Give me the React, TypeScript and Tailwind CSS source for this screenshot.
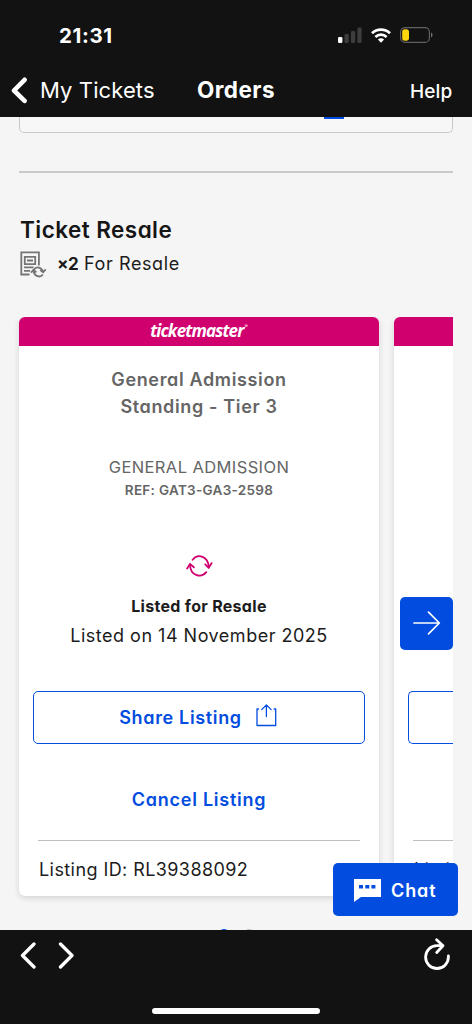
import React from "react";

function StatusBar() {
  return (
    <div className="flex h-[70px] items-center justify-between pl-[59px] pr-[39px]">
      <span className="pt-px text-[20.5px] font-bold leading-[24px] tracking-[0.6px]">21:31</span>
      <div className="flex items-center">
        <svg width="24" height="16" viewBox="0 0 24 16">
          <rect x="0" y="10" width="4.4" height="6" rx="1.2" fill="#fff" />
          <rect x="6.5" y="7" width="4.2" height="9" rx="1.2" fill="#3d3d3d" />
          <rect x="13" y="4" width="4.2" height="12" rx="1.2" fill="#3d3d3d" />
          <rect x="19.4" y="0.5" width="4.2" height="15.5" rx="1.2" fill="#3d3d3d" />
        </svg>
        <svg className="ml-[9px]" width="20" height="15" viewBox="0 0 20 15" fill="none" stroke="#fff" strokeWidth="2.7">
          <path d="M1 5.2C6 .4 14 .4 19 5.2" />
          <path d="M4.4 8.9C7.6 5.9 12.4 5.9 15.6 8.9" />
          <path d="M6.9 11.4C8.7 9.9 11.3 9.9 13.1 11.4L10 14.7Z" fill="#fff" stroke="none" />
        </svg>
        <svg className="ml-[9px]" width="33" height="16" viewBox="0 0 33 16">
          <rect x="0.6" y="0.6" width="28.8" height="14.8" rx="4.5" fill="none" stroke="#606060" strokeWidth="1.2" />
          <rect x="2.2" y="2.2" width="6.8" height="11.6" rx="2.8" fill="#ffd60a" />
          <path d="M31 5.5c2 .8 2 4.2 0 5z" fill="#707070" />
        </svg>
      </div>
    </div>
  );
}

function NavBar() {
  return (
    <div className="flex h-[47px] items-start pl-[11px]">
      <svg className="mt-[7px]" width="17" height="27" viewBox="0 0 17 27" fill="none" stroke="#fff" strokeWidth="4.6" strokeLinecap="round" strokeLinejoin="round">
        <path d="M13.6 2.8L3 13.5l10.6 10.3" />
      </svg>
      <span className="ml-[12px] w-[157px] whitespace-nowrap text-[22px] leading-[40px] tracking-[0.1px]">My Tickets</span>
      <span className="w-[213px] whitespace-nowrap text-[22.5px] font-bold leading-[40px] tracking-[0.45px]">Orders</span>
      <span className="whitespace-nowrap pt-[2px] text-[19px] font-medium leading-[40px] tracking-[0.1px]">Help</span>
    </div>
  );
}

function ResaleIcon() {
  return (
    <svg className="ml-[1px]" width="27" height="28" viewBox="0 0 27 28" fill="none" stroke="#757575" strokeWidth="1.8">
      <path d="M9.5 23.5H1.3V1.3h17.6v13.2" />
      <path d="M4.8 5.8h10.4v7.4H4.8z" />
      <path d="M7 9.5h6M4 16.3h9.5M4 19.8h6" />
      <path d="M13.8 18.7c2.2-3.5 7.7-2.9 9.1 1.8M20.3 19l2.8 2.3 2.6-3M11 21.7l2.5-3 2.9 2.7M13.5 20c.8 5.5 6.8 7.1 9.4 3.5" />
    </svg>
  );
}

function RefreshIcon() {
  return (
    <svg width="27" height="22" viewBox="0 0 27 22" fill="none" stroke="#d0006f" strokeWidth="1.8" strokeLinecap="round" strokeLinejoin="round">
      <path d="M6.6 4.7C12-1.9 22.4 1.4 22.8 12.4" />
      <path d="M19.2 9.4l3.5 3.4 3-4.7" />
      <path d="M20.3 17.2C14.8 23.7 4.2 20.5 4 9.4" />
      <path d="M1.1 13.5L4 8.9l3.9 3.3" />
    </svg>
  );
}

function ListingCard() {
  return (
    <div className="h-[579px] w-[360px] shrink-0 overflow-hidden rounded-[6px] bg-white text-center whitespace-nowrap">
      <div className="flex h-[29px] items-center justify-center bg-[#d0006f] text-white">
        <span className="pb-[2px] font-['Open_Sans'] text-[17px] font-bold italic leading-[28px] tracking-[-0.85px]">ticketmaster</span>
        <span className="-mt-[9px] ml-[1px] text-[5px]">®</span>
      </div>
      <div className="px-[14px]">
        <h3 className="mt-[20px] text-[18px] font-semibold leading-[27px] tracking-[0.65px] text-[#656565]">
          General Admission
          <br />
          Standing - Tier 3
        </h3>
        <p className="mt-[35px] text-[16.5px] leading-[24px] tracking-[0.4px] text-[#656565]">GENERAL ADMISSION</p>
        <p className="text-[13.5px] font-semibold leading-[22px] tracking-[0.3px] text-[#656565]">REF: GAT3-GA3-2598</p>
        <div className="mt-[54px] flex h-[22px] justify-center">
          <RefreshIcon />
        </div>
        <p className="mt-[17px] text-[16px] font-bold leading-[24px] tracking-[0.3px] text-[#1c1c1c]">Listed for Resale</p>
        <p className="mt-[3px] text-[18px] leading-[30px] tracking-[0.5px] text-[#1c1c1c]">Listed on 14 November 2025</p>
        <button className="mt-[40px] flex h-[53px] w-full items-center justify-center rounded-[5px] border-[1.5px] border-[#024ddf] text-[18px] font-semibold tracking-[0.65px] text-[#024ddf]">
          Share Listing
          <svg className="-mt-[4px] ml-[14px] mr-[2px]" width="21" height="25" viewBox="0 0 21 25" fill="none" stroke="#024ddf" strokeWidth="1.3" strokeLinecap="round" strokeLinejoin="round">
            <path d="M2.5 6H1v16.5h18.7V6h-1.5M10.4 13.5V2M5.7 6.6l4.7-4.7 4.7 4.7" />
          </svg>
        </button>
        <button className="mt-[40px] block h-[32px] w-full text-[18px] font-semibold leading-[32px] tracking-[0.75px] text-[#024ddf]">Cancel Listing</button>
        <div className="mx-[5px] mt-[24px] border-t border-[#bfbfbf] pl-px text-left text-[18px] leading-[57px] tracking-[0.42px] text-[#1c1c1c]">
          Listing ID: RL39388092
        </div>
      </div>
    </div>
  );
}

// Left edge of the following card in the carousel
function NextCard() {
  return (
    <div className="h-[579px] min-w-0 flex-1 rounded-tl-[6px] rounded-bl-[6px] bg-white">
      <div className="h-[29px] rounded-tl-[6px] bg-[#d0006f]" />
      <div className="ml-[14px] mt-[345px] h-[53px] rounded-l-[5px] border-[1.5px] border-r-0 border-[#024ddf]" />
      <div className="ml-[19px] mt-[96px] border-t border-[#bfbfbf] pl-px text-[18px] leading-[57px] tracking-[0.42px] text-[#1c1c1c]">
        Listi
      </div>
    </div>
  );
}

function Listings() {
  return (
    <div className="relative mt-[37px] h-[612px]">
      <div className="-ml-[10px] flex gap-[15px] overflow-hidden pb-[8px] pl-[10px] [&>div]:shadow-[0_2px_6px_rgba(0,0,0,0.14)]">
        <ListingCard />
        <NextCard />
      </div>
      <button className="absolute right-0 top-[280px] flex h-[53px] w-[53px] items-center justify-center rounded-[5px] bg-[#024ddf]">
        <svg className="-mt-px" width="28" height="24" viewBox="0 0 28 24" fill="none" stroke="#fff" strokeWidth="1.7" strokeLinecap="round" strokeLinejoin="round">
          <path d="M1 12h25M15.5 1.2L26.3 12 15.5 22.8" />
        </svg>
      </button>
      <div className="absolute left-[201px] top-[612px] flex gap-[17px]">
        <span className="h-[8px] w-[8px] rounded-full bg-[#024ddf]" />
        <span className="h-[8px] w-[8px] rounded-full bg-[#bfbfbf]" />
      </div>
    </div>
  );
}

function ChatButton() {
  return (
    <button className="absolute left-[333px] top-[746px] flex h-[53px] w-[125px] items-center rounded-[5px] bg-[#024ddf] pl-[20px] text-[18px] font-semibold tracking-[0.9px] text-white">
      <svg width="28" height="24" viewBox="0 0 28 24">
        <path d="M1 1h27v18H8l-7 5z" fill="#fff" />
        <path d="M6 7h4v3.5H6zM12.3 7h4v3.5h-4zM18.4 7h4v3.5h-4z" fill="#024ddf" />
      </svg>
      <span className="ml-[10px] pt-px">Chat</span>
    </button>
  );
}

function BrowserBar() {
  return (
    <div className="h-[94px] bg-[#121212]">
      <div className="flex h-[78px] items-start pl-[20px] pt-[7px]">
        <svg className="mt-[5px]" width="54" height="27" viewBox="0 0 54 27" fill="none" stroke="#fff" strokeWidth="3.3" strokeLinecap="round" strokeLinejoin="round">
          <path d="M14 2L2.5 13.5 14 25M40.5 2L52 13.5 40.5 25" />
        </svg>
        <svg className="ml-[349px]" width="28" height="34" viewBox="0 0 28 34" fill="none" stroke="#fff" strokeWidth="2.8" strokeLinecap="round" strokeLinejoin="round">
          <path d="M20 8.7H14A11.4 11.4 0 1 0 25.4 20.1V19M13.6 2.7L20 8.7l-6.3 6.8" />
        </svg>
      </div>
      <div className="mx-auto h-[6px] w-[168px] rounded-full bg-white" />
    </div>
  );
}

export default function App() {
  return (
    <div className="flex h-[1024px] w-[472px] flex-col overflow-hidden bg-[#f5f5f5] font-['Inter',sans-serif]">
      <header className="h-[117px] shrink-0 bg-[#121212] text-white">
        <StatusBar />
        <NavBar />
      </header>
      <main className="relative h-[813px] overflow-hidden px-[19px] [font-feature-settings:'cv11']">
        <div className="h-[16px] rounded-b-[5px] border border-t-0 border-[#c8c8c8] bg-[#f7f7f7]">
          <div className="ml-[304px] h-[1.5px] w-[20px] bg-[#024ddf]" />
        </div>
        <div className="mt-[38px] h-[2px] bg-[#cacaca]" />
        <h2 className="mt-[42px] pl-px text-[22.5px] font-semibold leading-[30px] tracking-[0.45px] text-[#161616]">Ticket Resale</h2>
        <div className="mt-[4px] flex h-[31px] items-center text-[18px] leading-[26px] tracking-[0.6px] text-[#1c1c1c]">
          <ResaleIcon />
          <span className="-mt-px ml-[10px] text-[17px] font-bold tracking-[-0.6px]">×2</span>
          <span className="-mt-px ml-[6px]">For Resale</span>
        </div>
        <Listings />
        <ChatButton />
      </main>
      <BrowserBar />
    </div>
  );
}
